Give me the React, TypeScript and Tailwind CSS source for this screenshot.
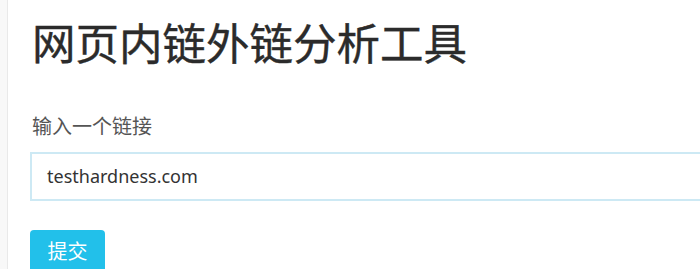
import React from 'react';

const font = { fontFamily: '"Noto Sans", "Noto Sans CJK SC", sans-serif' };

export default function App() {
  return (
    <div className="flex min-h-[269px] w-[700px] overflow-hidden bg-white" style={font}>
      {/* left gutter */}
      <div className="w-[8px] shrink-0 bg-[#f8f8f8] border-r border-[#e9e9e9]" />

      <div className="flex-1 min-w-0 pl-[22px]">
        <h1 className="mt-[17px] ml-[2px] h-[52px] text-[43.5px] leading-[52px] font-normal text-[#2b2b2b] whitespace-nowrap [-webkit-text-stroke:0.4px_#2b2b2b]">
          网页内链外链分析工具
        </h1>

        <label className="block mt-[44px] ml-[2px] h-[28px] text-[20px] leading-[28px] text-[#555]">
          输入一个链接
        </label>

        <div className="mt-[11px] h-[49px] w-[700px] border-2 border-[#cde9f4] flex items-center pl-[15px]">
          <span className="text-[18px] text-[#333]">testhardness.com</span>
        </div>

        <button className="mt-[29px] h-[44px] w-[75px] rounded-[4px] bg-[#22c0ea] text-white text-[20px] leading-[44px] pb-[6px]">
          提交
        </button>
      </div>
    </div>
  );
}
